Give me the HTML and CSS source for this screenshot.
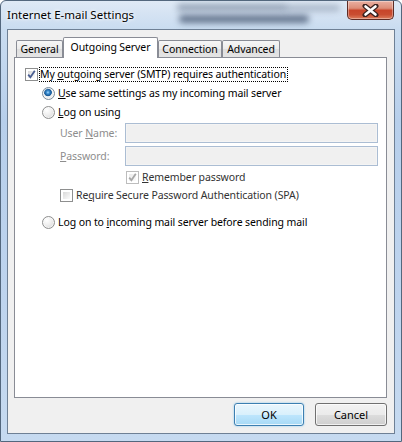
FILE: index.html
```html
<!doctype html>
<html>
<head>
    <meta charset="utf-8">
    <title>Internet E-mail Settings</title>
    <link rel="stylesheet" href="styles.css">
</head>
<body>
    <div class="window">
        <div class="titlebar">
            <span class="blur b1"></span>
            <span class="blur b2"></span>
            <span class="blur b3"></span>
            <div class="title">Internet E-mail Settings</div>
            <div class="close">
                <svg width="17" height="13" viewBox="0 0 17 13">
                    <path d="M3 2 L14 11 M14 2 L3 11" stroke="#3b2320" stroke-width="5" stroke-linecap="round"/>
                    <path d="M3.5 2.5 L13.5 10.5 M13.5 2.5 L3.5 10.5" stroke="#fff" stroke-width="2.6" stroke-linecap="round"/>
                </svg>
            </div>
        </div>

        <div class="client">
            <div class="tabs">
                <div class="tab t-general">General</div>
                <div class="tab t-outgoing active">Outgoing Server</div>
                <div class="tab t-connection">Connection</div>
                <div class="tab t-advanced">Advanced</div>
            </div>

            <div class="panel">
                <div class="row r1">
                    <span class="cb checked">
                        <svg width="11" height="11" viewBox="0 0 11 11"><path d="M2.2 5.6 L4.4 8.2 L8.8 1.8" fill="none" stroke="#4a5e92" stroke-width="1.8"/></svg>
                    </span>
                    <span class="focus">My <u>o</u>utgoing server (SMTP) requires authentication</span>
                </div>
                <div class="row r2">
                    <span class="radio on"></span>
                    <span class="lbl"><u>U</u>se same settings as my incoming mail server</span>
                </div>
                <div class="row r3">
                    <span class="radio"></span>
                    <span class="lbl"><u>L</u>og on using</span>
                </div>
                <div class="row r4">
                    <span class="field-lbl">User <u>N</u>ame:</span>
                    <input class="field" type="text" disabled>
                </div>
                <div class="row r5">
                    <span class="field-lbl"><u>P</u>assword:</span>
                    <input class="field" type="password" disabled>
                </div>
                <div class="row r6">
                    <span class="cb checked disabled">
                        <svg width="11" height="11" viewBox="0 0 11 11"><path d="M2.2 5.6 L4.4 8.2 L8.8 1.8" fill="none" stroke="#a8a8a8" stroke-width="1.8"/></svg>
                    </span>
                    <span class="lbl"><u>R</u>emember password</span>
                </div>
                <div class="row r7">
                    <span class="cb"></span>
                    <span class="lbl">Re<u>q</u>uire Secure Password Authentication (SPA)</span>
                </div>
                <div class="row r8">
                    <span class="radio"></span>
                    <span class="lbl">Log on to <u>i</u>ncoming mail server before sending mail</span>
                </div>
            </div>

            <div class="buttons">
                <button class="btn default">OK</button>
                <button class="btn cancel">Cancel</button>
            </div>
        </div>
    </div>
</body>
</html>
```

FILE: styles.css
```css
*{
    box-sizing: border-box;
}
body{
    margin: 0;
    font-family: "Noto Sans", sans-serif;
    font-size: 10.5px;
    letter-spacing: -0.1px;
    color: #000;
}
.window{
    width: 402px;
    height: 442px;
    border: 1px solid #53677d;
    border-radius: 6px 6px 0 0;
    background: linear-gradient(180deg, #dfe9f5 0, #c9dcf0 28px, #b7cfeb 120px, #bed4ee 300px, #c6daf0 100%);
    display: flex;
    flex-direction: column;
    overflow: hidden;
}

/* title bar */
.titlebar{
    height: 28px;
    display: flex;
    align-items: flex-start;
    position: relative;
}
.title{
    position: relative;
    margin: 6px 0 0 6px;
    font-size: 11.5px;
    letter-spacing: 0;
    line-height: 16px;
    text-shadow: 0 0 5px #fff, 0 0 3px #fff;
}
.blur{
    position: absolute;
    background: rgba(55, 72, 100, 0.7);
    filter: blur(3px);
    border-radius: 4px;
}
.b1{ left: 176px; top: 3px; width: 110px; height: 7px; opacity: .6; }
.b2{ left: 178px; top: 14px; width: 130px; height: 8px; }
.b3{ left: 284px; top: 4px; width: 55px; height: 6px; opacity: .45; }
.close{
    position: relative;
    margin-left: auto;
    margin-right: 7px;
    width: 47px;
    height: 19px;
    border: 1px solid #5d2c25;
    border-top: none;
    border-radius: 0 0 5px 5px;
    background: linear-gradient(180deg, #eab0a2 0, #dc8d78 40%, #c8452a 52%, #c94d31 75%, #dc7d5d 100%);
    box-shadow: inset 0 0 0 1px rgba(255,255,255,.35);
    display: flex;
    align-items: center;
    justify-content: center;
}

/* client area */
.client{
    flex: 1;
    margin: 0 6px 7px;
    border: 1px solid #6e8095;
    background: #f0f0f0;
    padding: 6px 7px 7px 6px;
    display: flex;
    flex-direction: column;
}
.tabs{
    height: 21px;
    display: flex;
    align-items: flex-end;
    padding-left: 2px;
    position: relative;
    z-index: 1;
}
.tab{
    height: 17px;
    border: 1px solid #898c95;
    border-bottom: none;
    border-radius: 2px 2px 0 0;
    background: linear-gradient(180deg, #f6f6f6, #ebebeb 50%, #dfdfdf 51%, #e4e4e4);
    display: flex;
    align-items: center;
    justify-content: center;
    line-height: 15px;
}
.tab.active{
    height: 21px;
    margin-bottom: -1px;
    background: #fff;
    padding-bottom: 2px;
}
.t-general{ width: 47px; }
.t-outgoing{ width: 95px; }
.t-connection{ width: 64px; }
.t-advanced{ width: 58px; }

.panel{
    height: 341px;
    border: 1px solid #898c95;
    background: #fff;
    padding-top: 7px;
}
.row{
    display: flex;
    align-items: center;
    line-height: 15px;
}
.r1{ height: 18px; padding-left: 10px; }
.r2{ height: 19px; margin-top: 1px; padding-left: 27px; }
.r3{ height: 19px; padding-left: 27px; }
.r4{ height: 20px; margin-top: 1px; padding-left: 45px; }
.r5{ height: 20px; margin-top: 3px; padding-left: 45px; }
.r6{ height: 17px; margin-top: 3px; padding-left: 111px; }
.r7{ height: 17px; margin-top: 1px; padding-left: 45px; }
.r8{ height: 19px; margin-top: 9px; padding-left: 27px; }

.focus{
    margin-left: 1px;
    padding-right: 1px;
    border: 1px dotted #000;
    line-height: 13px;
}
.lbl{
    margin-left: 3px;
}
.r6 .lbl, .r7 .lbl{
    color: #333;
}
.field-lbl{
    width: 65px;
    color: #8d8d8d;
}
.field{
    width: 253px;
    height: 20px;
    margin: 0;
    border: 1px solid #abbdd3;
    background: #f0f0f0;
    box-shadow: inset 0 0 0 1px #f4f4f4;
}

/* checkbox + radio */
.cb{
    width: 13px;
    height: 13px;
    flex-shrink: 0;
    border: 1px solid #8e8f8f;
    padding: 2px;
    background: linear-gradient(135deg, #d9d9d9, #fbfbfb) content-box, #fff;
    position: relative;
}
.cb svg{
    position: absolute;
    left: 0;
    top: 0;
}
.cb.disabled{
    border-color: #bdbdbd;
    background: linear-gradient(135deg, #ececec, #fafafa) content-box, #fff;
}
.radio{
    width: 13px;
    height: 13px;
    flex-shrink: 0;
    border: 1px solid #8e8f8f;
    border-radius: 50%;
    background: radial-gradient(circle at 35% 30%, #fff 0, #f0f0f0 40%, #d2d2d2 100%);
    box-shadow: inset 0 0 0 1px rgba(255,255,255,.6);
}
.radio.on{
    border-color: #7a8c9c;
    background: radial-gradient(circle at 45% 40%, #a9dcff 0, #3b8fd3 1.5px, #1b5a97 3.2px, #2a6aa3 3.6px, #f3f3f3 4.2px, #d6d6d6 100%);
}

/* dialog buttons */
.buttons{
    margin-top: 5px;
    display: flex;
    justify-content: flex-end;
    gap: 11px;
}
.btn{
    height: 23px;
    margin: 0;
    padding: 0;
    font-family: "Noto Sans", sans-serif;
    font-size: 11px;
    color: #000;
    border: 1px solid #707070;
    border-radius: 3px;
    background: linear-gradient(180deg, #f2f2f2 0, #ebebeb 50%, #dddddd 51%, #cfcfcf 100%);
    box-shadow: inset 0 0 0 1px rgba(255,255,255,.7);
}
.btn.default{
    width: 70px;
    border-color: #3c7fb1;
    background: linear-gradient(180deg, #eaf6fd 0, #d9f0fc 50%, #bee6fd 51%, #a7d9f5 100%);
    box-shadow: inset 0 0 0 1px rgba(255,255,255,.75), 0 0 2px #7fc1ea;
}
.btn.cancel{
    width: 72px;
}
```
